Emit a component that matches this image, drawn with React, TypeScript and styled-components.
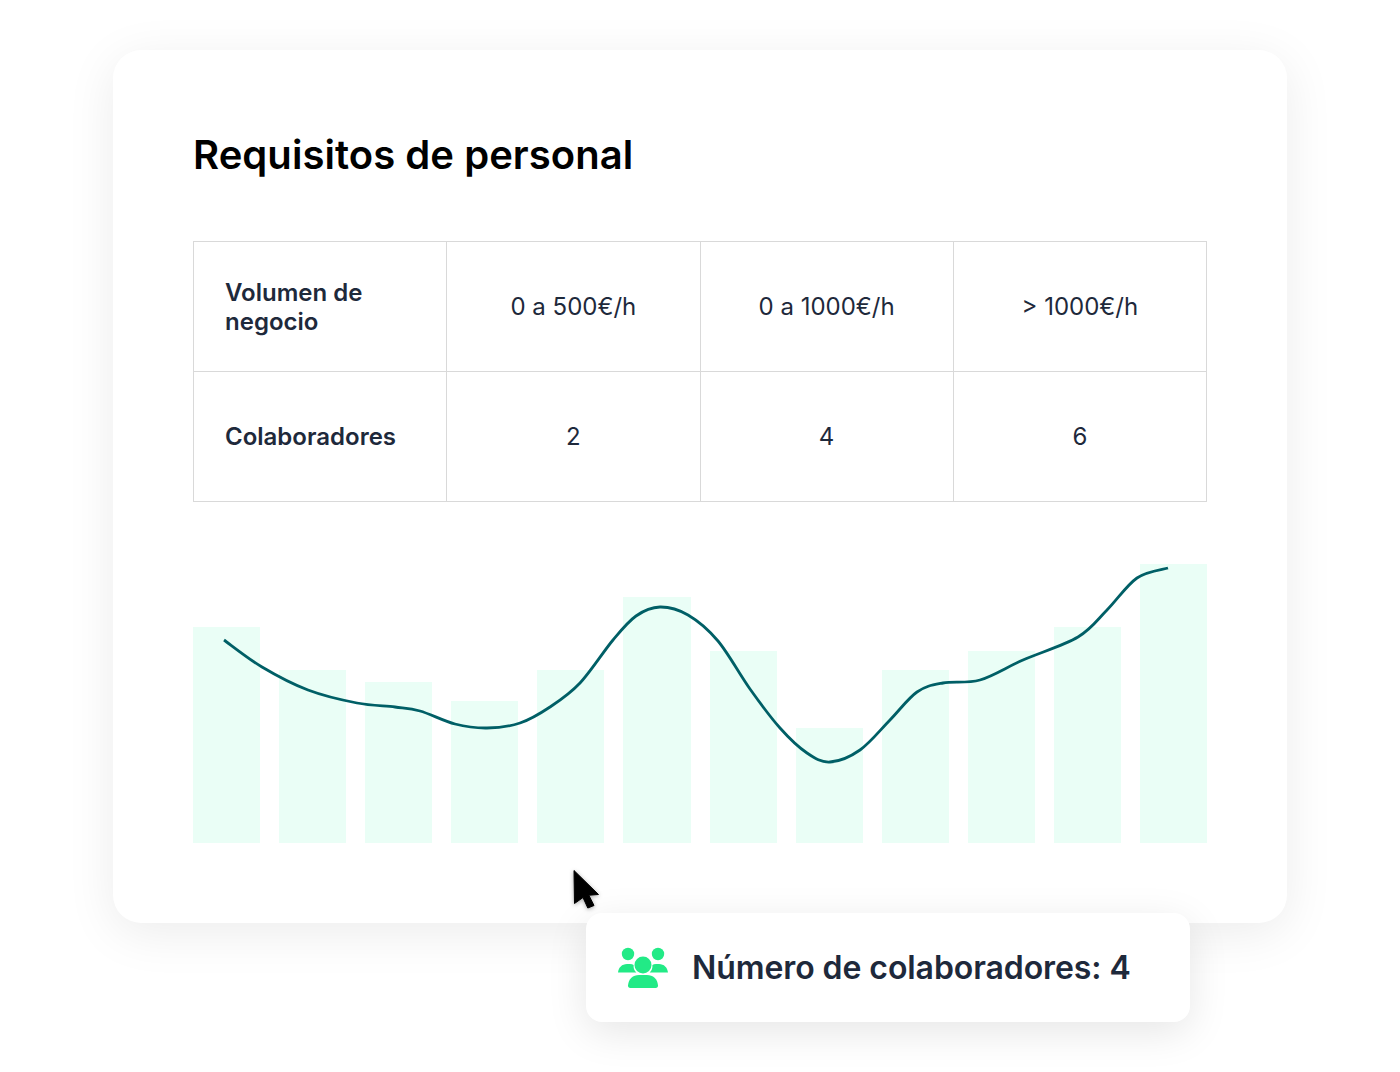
import React from "react";
import styled, { createGlobalStyle } from "styled-components";

const BAR_TOPS = [627, 670, 682, 701, 670, 597, 651, 728, 670, 651, 627, 564];
const CHART_TOP = 564;
const CHART_LEFT = 193;

const LINE_POINTS: [number, number][] = [
  [224, 640], [262, 667], [308, 690], [357, 703], [395, 707], [420, 711], [455, 724],
  [487, 728], [520, 723], [550, 707], [580, 683], [613, 640], [636, 616], [660, 607],
  [688, 615], [718, 641], [750, 689], [780, 728], [807, 753], [830, 762], [860, 750],
  [890, 720], [917, 692], [943, 683], [980, 680], [1023, 660], [1078, 637], [1107, 610],
  [1137, 578], [1168, 568],
];

// catmull-rom through the traced points, shifted into the chart's own coordinates
const buildLine = (points: [number, number][]) => {
  const pts = points.map(([x, y]) => [x - CHART_LEFT, y - CHART_TOP]);
  let d = `M${pts[0][0]} ${pts[0][1]}`;
  for (let i = 0; i < pts.length - 1; i++) {
    const p0 = pts[i - 1] || pts[i];
    const p1 = pts[i];
    const p2 = pts[i + 1];
    const p3 = pts[i + 2] || p2;
    const c1x = p1[0] + (p2[0] - p0[0]) / 6;
    const c1y = p1[1] + (p2[1] - p0[1]) / 6;
    const c2x = p2[0] - (p3[0] - p1[0]) / 6;
    const c2y = p2[1] - (p3[1] - p1[1]) / 6;
    d += ` C${c1x} ${c1y} ${c2x} ${c2y} ${p2[0]} ${p2[1]}`;
  }
  return d;
};

const COLUMNS = ["0 a 500€/h", "0 a 1000€/h", "> 1000€/h"];
const STAFF = ["2", "4", "6"];

const TeamIcon = () => (
  <svg width="52" height="42" viewBox="0 0 52 42" fill="#22ea86">
    <circle cx="11" cy="7" r="6.200" />
    <circle cx="41" cy="7" r="6.200" />
    <circle cx="26" cy="18" r="8.500" />
    <path d="M1 25.500C1.600 20.500 5 17 10 17h3c1.500 0 2.700.3 3.600 1-.3 3 .6 5.600 2.800 7.500z" />
    <path d="M51 25.500C50.400 20.500 47 17 42 17h-3c-1.500 0-2.700.3-3.600 1 .3 3-.6 5.600-2.800 7.500z" />
    <path d="M11 38.500C11.500 32 16 28 22 28h8c6 0 10.500 4 11 10.500.1 1.500-.8 2.500-2.300 2.500H13.300c-1.500 0-2.400-1-2.300-2.500z" />
  </svg>
);

const Pointer = () => (
  <svg width="28" height="40" viewBox="0 0 28 40">
    <path
      d="M2 1.500 26.500 25.500 16.800 26.200 22 36.500 15.800 39 11 28.500 2.500 34.500z"
      fill="#000"
      stroke="#000"
      strokeWidth="1"
      strokeLinejoin="round"
    />
  </svg>
);

export default function App() {
  return (
    <Page>
      <GlobalStyle />
      <Card>
        <Title>Requisitos de personal</Title>
        <Requirements>
          <tbody>
            <tr>
              <RowHead>Volumen de negocio</RowHead>
              {COLUMNS.map((c) => (
                <Cell key={c}>{c}</Cell>
              ))}
            </tr>
            <tr>
              <RowHead>Colaboradores</RowHead>
              {STAFF.map((c) => (
                <Cell key={c}>{c}</Cell>
              ))}
            </tr>
          </tbody>
        </Requirements>
        <Chart>
          {BAR_TOPS.map((top, i) => (
            <Bar key={i} $top={top - CHART_TOP} />
          ))}
          <Trend viewBox="0 0 1014 279">
            <path
              d={buildLine(LINE_POINTS)}
              fill="none"
              stroke="#005f66"
              strokeWidth="2.800"
            />
          </Trend>
        </Chart>
        <Cursor>
          <Pointer />
        </Cursor>
        <Popup>
          <TeamIcon />
          <PopupText>Número de colaboradores: 4</PopupText>
        </Popup>
      </Card>
    </Page>
  );
}

const GlobalStyle = createGlobalStyle`
  html, body {
    margin: 0;
    padding: 0;
    background: #fff;
  }
  body {
    font-family: "Inter", "Liberation Sans", sans-serif;
  }
`;

const Page = styled.div`
  box-sizing: border-box;
  width: 1400px;
  height: 1072px;
  padding: 50px 113px 0;
  overflow: hidden;
`;

const Card = styled.section`
  position: relative;
  box-sizing: border-box;
  width: 1174px;
  height: 873px;
  padding: 81px 80px 80px;
  background: #fff;
  border-radius: 28px;
  box-shadow: 0 10px 50px rgba(0, 0, 0, 0.08);
`;

const Title = styled.h1`
  margin: 0 0 62px;
  font-size: 40px;
  line-height: 48px;
  font-weight: 600;
  letter-spacing: 0.05px;
  color: #000;
`;

const Requirements = styled.table`
  width: 1014px;
  table-layout: fixed;
  border-collapse: collapse;
`;

const Cell = styled.td`
  box-sizing: border-box;
  height: 130px;
  padding: 0;
  border: 1px solid #d9d9d9;
  text-align: center;
  font-size: 24px;
  line-height: 29px;
  color: #1e293b;
`;

const RowHead = styled(Cell)`
  padding: 0 64px 0 31px;
  text-align: left;
  font-weight: 600;
`;

const Chart = styled.div`
  position: relative;
  display: grid;
  grid-template-columns: repeat(12, 1fr);
  column-gap: 19px;
  height: 279px;
  margin-top: 62px;
`;

const Bar = styled.div<{ $top: number }>`
  margin-top: ${(p) => p.$top}px;
  background: #eafef6;
`;

const Trend = styled.svg`
  position: absolute;
  inset: 0;
  width: 100%;
  height: 100%;
  overflow: visible;
`;

const Cursor = styled.div`
  position: absolute;
  left: 459px;
  top: 819px;
  line-height: 0;
  filter: drop-shadow(0 1px 2px rgba(0, 0, 0, 0.35));
`;

const Popup = styled.div`
  position: absolute;
  left: 473px;
  top: 863px;
  box-sizing: border-box;
  display: flex;
  align-items: center;
  gap: 23px;
  width: 604px;
  height: 109px;
  padding: 0 31px;
  background: #fff;
  border-radius: 16px;
  box-shadow: 0 10px 40px rgba(0, 0, 0, 0.1);
`;

const PopupText = styled.span`
  font-size: 32px;
  line-height: 40px;
  font-weight: 600;
  letter-spacing: -0.08px;
  color: #1e293b;
  white-space: nowrap;
`;
